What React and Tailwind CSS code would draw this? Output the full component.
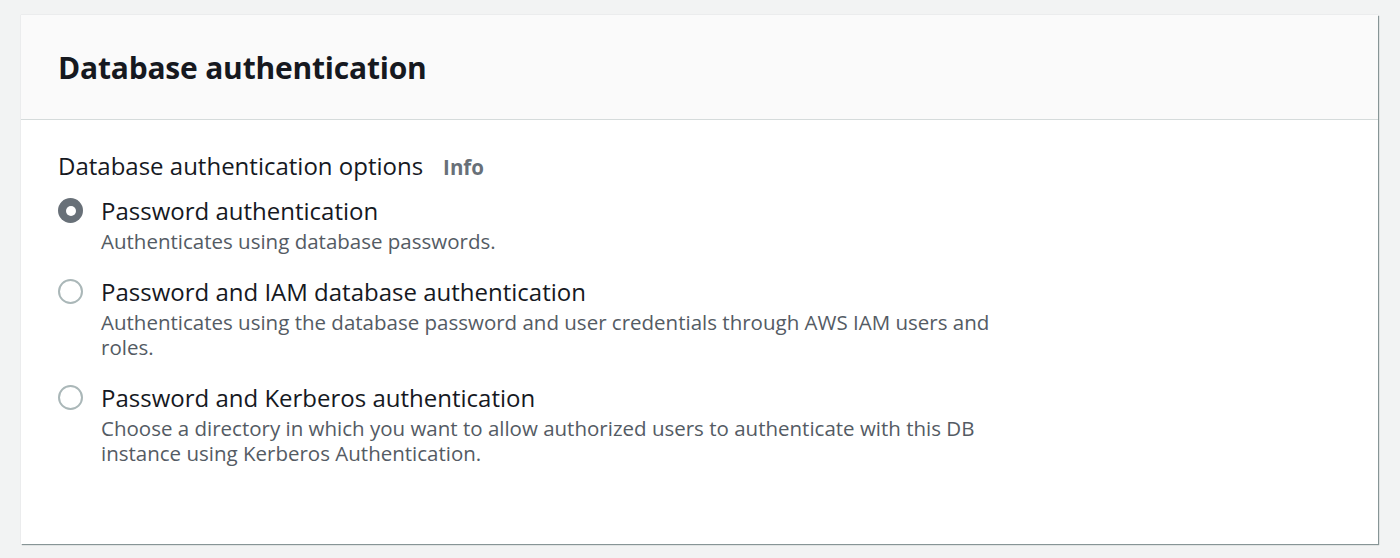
import React from "react";

const options = [
  {
    label: "Password authentication",
    description: "Authenticates using database passwords.",
  },
  {
    label: "Password and IAM database authentication",
    description:
      "Authenticates using the database password and user credentials through AWS IAM users and roles.",
  },
  {
    label: "Password and Kerberos authentication",
    description:
      "Choose a directory in which you want to allow authorized users to authenticate with this DB instance using Kerberos Authentication.",
  },
];

const Radio = ({ checked }) =>
  checked ? (
    <span className="mt-[5px] flex h-[25px] w-[25px] shrink-0 items-center justify-center rounded-full bg-[#687078]">
      <span className="h-[10px] w-[10px] rounded-full bg-white" />
    </span>
  ) : (
    <span className="mt-[5px] h-[25px] w-[25px] shrink-0 rounded-full border-2 border-[#aab7b8] bg-white" />
  );

export default function App() {
  const [selected, setSelected] = React.useState(0);

  return (
    <div
      className="min-h-[558px] bg-[#f2f3f3] pt-[15px] pl-[21px] pr-[22px]"
      style={{ fontFamily: '"Open Sans", "Noto Sans", sans-serif' }}
    >
      <div className="h-[529px] bg-white shadow-[1px_1px_1px_0_#879596,0_0_1px_0_#c6cbcf]">
        <div className="flex h-[105px] items-center border-b border-[#d5dbdb] bg-[#fafafa] px-[37px]">
          <h2 className="text-[30px] font-bold tracking-[-0.2px] text-[#16191f]">
            Database authentication
          </h2>
        </div>

        <div className="px-[37px] pt-[31px]">
          <div className="flex items-baseline gap-[20px] text-[24px] leading-[30px] text-[#16191f]">
            <span>Database authentication options</span>
            <span className="text-[20.5px] font-bold text-[#687078]">Info</span>
          </div>

          <div className="mt-[11px] flex flex-col gap-[20px]">
            {options.map((opt, i) => (
              <label
                key={opt.label}
                className="flex cursor-pointer gap-[18px]"
                onClick={() => setSelected(i)}
              >
                <Radio checked={selected === i} />
                <div className="max-w-[920px]">
                  <div className="text-[24px] leading-[36px] text-[#16191f]">{opt.label}</div>
                  <div className="text-[20.5px] leading-[25px] text-[#545b64]">
                    {opt.description}
                  </div>
                </div>
              </label>
            ))}
          </div>
        </div>
      </div>
    </div>
  );
}
